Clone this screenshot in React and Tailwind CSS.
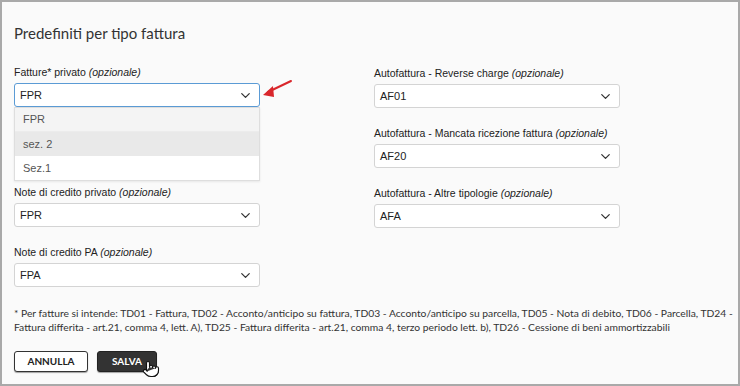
import { ChevronDown, Pointer } from 'lucide-react'

const lato = { fontFamily: 'Lato, "Open Sans", sans-serif' }

function Select({ value, focused }) {
  return (
    <div
      className={`h-[24px] flex items-center justify-between pl-[5px] pr-[6px] bg-white rounded-[3px] border text-[11px] text-[#222]
        ${focused ? 'border-[#5b9bd5]' : 'border-[#d4d4d4]'}`}
    >
      <span>{value}</span>
      <ChevronDown size={15} strokeWidth={2} color="#333" />
    </div>
  )
}

function Field({ label, value, focused, children }) {
  return (
    <div className="relative flex flex-col">
      <div className="h-[14px] leading-[14px] text-[10.5px] text-[#222] mb-[4px] whitespace-nowrap">
        {label} <i>(opzionale)</i>
      </div>
      <div className="relative">
        <Select value={value} focused={focused} />
        {children}
      </div>
    </div>
  )
}

function Dropdown() {
  return (
    <div className="absolute left-0 top-full w-full z-10 bg-white border border-[#dedede] shadow-[0_1px_2px_rgba(0,0,0,0.08)] text-[11px] text-[#555]">
      <div className="h-[24px] flex items-center pl-[8px] bg-[#f4f4f4] border-b border-[#ececec]">FPR</div>
      <div className="h-[24px] flex items-center pl-[8px] bg-[#e9e9e9]">sez. 2</div>
      <div className="h-[24px] flex items-center pl-[8px] bg-white">Sez.1</div>
    </div>
  )
}

export default function App() {
  return (
    <div
      className="relative w-[740px] h-[386px] border-2 border-[#a9a9a9] bg-[#fafafa] pl-[12px] pr-[4px] overflow-hidden"
      style={{ fontFamily: '"Liberation Sans", Arial, sans-serif' }}
    >
      <h1 className="pt-[21px] text-[15px] leading-[20px] text-[#333]" style={lato}>
        Predefiniti per tipo fattura
      </h1>

      <div className="mt-[22px] flex gap-[114px]">
        <div className="w-[246px] flex flex-col gap-[18px]">
          <Field label="Fatture* privato" value="FPR" focused>
            <Dropdown />
          </Field>
          <div className="h-[42px]" />
          <Field label="Note di credito privato" value="FPR" />
          <Field label="Note di credito PA" value="FPA" />
        </div>
        <div className="w-[246px] flex flex-col gap-[18px] pt-[1px]">
          <Field label="Autofattura - Reverse charge" value="AF01" />
          <Field label="Autofattura - Mancata ricezione fattura" value="AF20" />
          <Field label="Autofattura - Altre tipologie" value="AFA" />
        </div>
      </div>

      <p className="mt-[19px] text-[10.3px] leading-[14px] text-[#333]" style={lato}>
        * Per fatture si intende: TD01 - Fattura, TD02 - Acconto/anticipo su fattura, TD03 - Acconto/anticipo su parcella, TD05 - Nota di debito, TD06 - Parcella, TD24 - Fattura differita - art.21, comma 4, lett. A), TD25 - Fattura differita - art.21, comma 4, terzo periodo lett. b), TD26 - Cessione di beni ammortizzabili
      </p>

      <div className="mt-[17px] flex items-start gap-[9px]" style={lato}>
        <button className="w-[74px] h-[21px] bg-white border border-[#333] rounded-[3px] shadow-[0_1px_1px_rgba(0,0,0,0.35)] text-[10px] font-bold text-[#222]">
          ANNULLA
        </button>
        <div className="relative flex">
          <button className="w-[60px] h-[21px] bg-[#333] border border-[#222] rounded-[3px] shadow-[0_1px_1px_rgba(0,0,0,0.35)] text-[10px] font-bold text-white">
            SALVA
          </button>
          <Pointer size={18} fill="white" color="#111" strokeWidth={1.5} className="absolute left-[45px] top-[9px]" />
        </div>
      </div>

      <svg className="absolute left-0 top-0 pointer-events-none" width="740" height="386">
        <line x1="289" y1="79" x2="266" y2="90" stroke="#d9262b" strokeWidth="2" strokeLinecap="round" />
        <polygon points="261,93 271,84 272,95" fill="#d9262b" />
      </svg>
    </div>
  )
}
